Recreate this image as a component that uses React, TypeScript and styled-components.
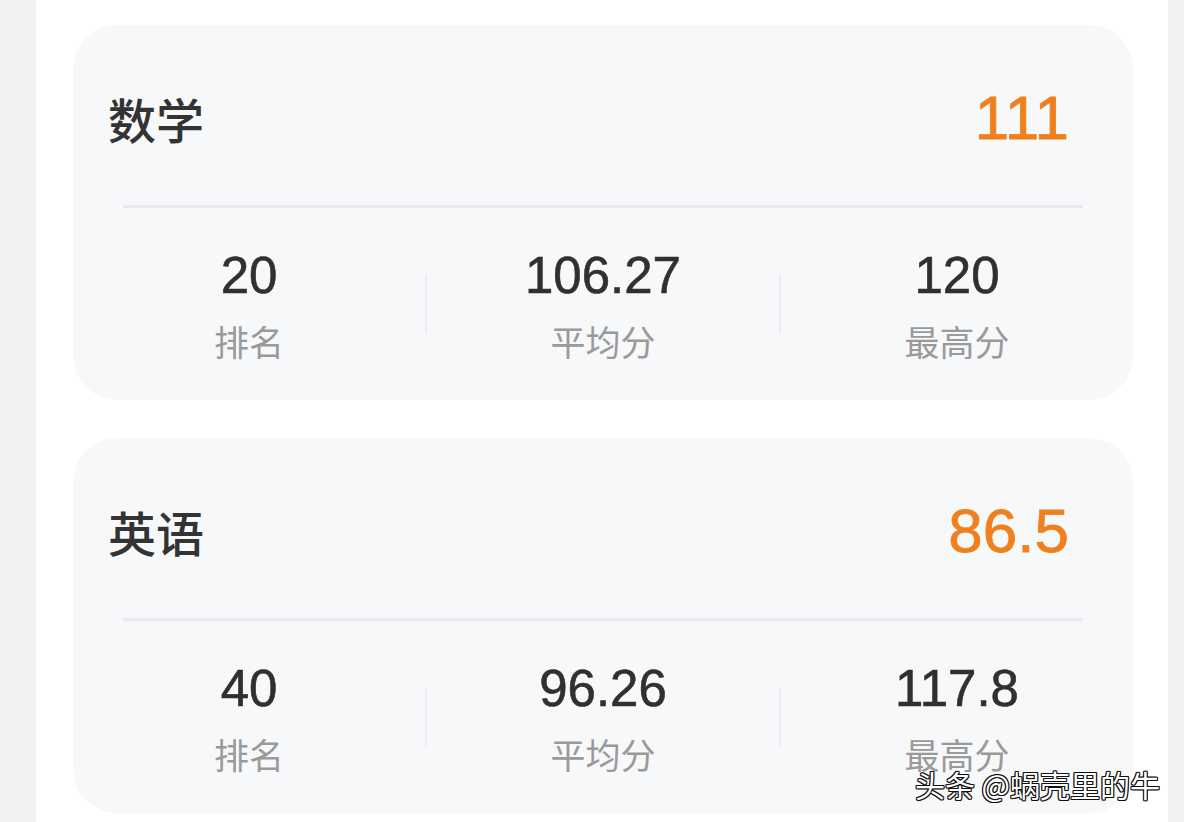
import React from "react";
import styled, { createGlobalStyle } from "styled-components";

const GlobalStyle = createGlobalStyle`
  html, body {
    margin: 0;
    padding: 0;
    background: #f2f2f2;
  }
  * {
    box-sizing: border-box;
  }
`;

const Page = styled.div`
  position: relative;
  display: flex;
  min-height: 822px;
  height: 822px;
  overflow: hidden;
  padding: 0 16px 0 36px;
  font-family: "Noto Sans CJK SC", "Noto Sans", sans-serif;
`;

const Column = styled.main`
  flex: 1;
  background: #ffffff;
  padding: 25px 35px 0 37px;
  display: flex;
  flex-direction: column;
  gap: 38px;
`;

const Card = styled.section`
  background: #f7f8fa;
  border-radius: 44px;
  padding: 60px 0 42px;
`;

const Header = styled.div`
  display: flex;
  align-items: center;
  justify-content: space-between;
  height: 66px;
  padding: 0 64px 0 35px;
`;

const Title = styled.h2`
  margin: 0;
  font-family: "Noto Sans CJK SC", sans-serif;
  font-size: 48px;
  font-weight: 500;
  line-height: 1;
  color: #333333;
`;

const Score = styled.span`
  font-family: "Liberation Sans", Arial, sans-serif;
  font-size: 62px;
  line-height: 1;
  color: #f0801e;
  -webkit-text-stroke: 0.8px currentColor;
`;

const Divider = styled.hr`
  margin: 54px 50px 0;
  border: 0;
  height: 3px;
  background: #e8eaed;
`;

const Stats = styled.div`
  display: flex;
  align-items: center;
  margin-top: 42px;
`;

const Stat = styled.div`
  flex: 1;
  display: flex;
  flex-direction: column;
  align-items: center;
  gap: 22px;
`;

const Separator = styled.span`
  width: 2px;
  height: 60px;
  background: #eceef1;
  flex: none;
`;

const StatValue = styled.span`
  font-family: "Liberation Sans", Arial, sans-serif;
  font-size: 51px;
  line-height: 1;
  color: #303030;
  -webkit-text-stroke: 0.6px currentColor;
`;

const StatLabel = styled.span`
  font-family: "Noto Sans CJK SC", sans-serif;
  font-size: 35px;
  line-height: 1;
  color: #9a9a9a;
`;

const Watermark = styled.div`
  position: absolute;
  right: 24px;
  bottom: 23px;
  font-family: "Noto Sans CJK SC", sans-serif;
  font-size: 30px;
  line-height: 1;
  color: #ffffff;
  text-shadow:
    1px 1px 0 #111,
    -1px -1px 0 #111,
    1px -1px 0 #111,
    -1px 1px 0 #111,
    1px 0 0 #111,
    -1px 0 0 #111,
    0 1px 0 #111,
    0 -1px 0 #111;
`;

type Subject = {
  name: string;
  score: string;
  rank: string;
  average: string;
  highest: string;
};

const subjects: Subject[] = [
  { name: "数学", score: "111", rank: "20", average: "106.27", highest: "120" },
  { name: "英语", score: "86.5", rank: "40", average: "96.26", highest: "117.8" },
];

function SubjectCard({ subject }: { subject: Subject }) {
  const stats = [
    { value: subject.rank, label: "排名" },
    { value: subject.average, label: "平均分" },
    { value: subject.highest, label: "最高分" },
  ];
  return (
    <Card>
      <Header>
        <Title>{subject.name}</Title>
        <Score>{subject.score}</Score>
      </Header>
      <Divider />
      <Stats>
        {stats.map((s, i) => (
          <React.Fragment key={s.label}>
            {i > 0 && <Separator />}
            <Stat>
              <StatValue>{s.value}</StatValue>
              <StatLabel>{s.label}</StatLabel>
            </Stat>
          </React.Fragment>
        ))}
      </Stats>
    </Card>
  );
}

export default function App() {
  return (
    <>
      <GlobalStyle />
      <Page>
        <Column>
          {subjects.map((s) => (
            <SubjectCard key={s.name} subject={s} />
          ))}
        </Column>
        <Watermark>头条 @蜗壳里的牛</Watermark>
      </Page>
    </>
  );
}
